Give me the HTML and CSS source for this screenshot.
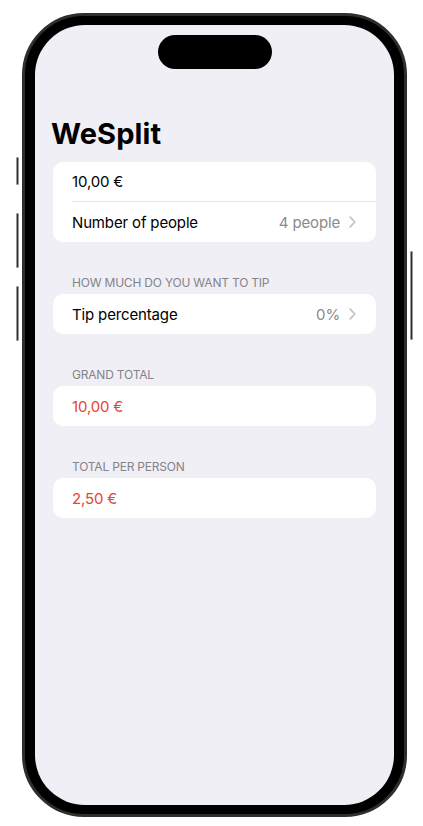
FILE: index.html
```html
<!DOCTYPE html>
<html>
<head>
<meta charset="utf-8">
<link rel="stylesheet" href="styles.css">
</head>
<body>
<div class="phone">
  <span class="btn btn-action"></span>
  <span class="btn btn-vol-up"></span>
  <span class="btn btn-vol-down"></span>
  <span class="btn btn-power"></span>
  <div class="bezel">
    <div class="screen">
      <div class="island"></div>
      <h1 class="title">WeSplit</h1>

      <div class="card">
        <div class="row divided"><span class="label">10,00 €</span></div>
        <div class="row">
          <span class="label">Number of people</span>
          <span class="value">4 people
            <svg class="chev" width="7" height="12" viewBox="0 0 7 12"><polyline points="1.2,1.2 5.8,6 1.2,10.8" fill="none" stroke="#c4c4c7" stroke-width="1.8" stroke-linecap="round" stroke-linejoin="round"/></svg>
          </span>
        </div>
      </div>

      <div class="header">HOW MUCH DO YOU WANT TO TIP</div>
      <div class="card">
        <div class="row">
          <span class="label">Tip percentage</span>
          <span class="value">0%
            <svg class="chev" width="7" height="12" viewBox="0 0 7 12"><polyline points="1.2,1.2 5.8,6 1.2,10.8" fill="none" stroke="#c4c4c7" stroke-width="1.8" stroke-linecap="round" stroke-linejoin="round"/></svg>
          </span>
        </div>
      </div>

      <div class="header">GRAND TOTAL</div>
      <div class="card">
        <div class="row"><span class="label red">10,00 €</span></div>
      </div>

      <div class="header">TOTAL PER PERSON</div>
      <div class="card">
        <div class="row"><span class="label red">2,50 €</span></div>
      </div>
    </div>
  </div>
</div>
</body>
</html>
```
FILE: styles.css
```css
* { box-sizing: border-box; }
html, body { margin: 0; padding: 0; background: #ffffff; }
body {
  font-family: Inter, "Noto Sans", "Liberation Sans", sans-serif;
  padding: 13px 0 0 22px;
}
.phone {
  position: relative;
  width: 385px;
  height: 804px;
}
.bezel {
  width: 100%;
  height: 100%;
  background: #000;
  border: 3px solid #2e2e2e;
  border-radius: 62px;
  padding: 9px 10px;
}
.screen {
  width: 100%;
  height: 100%;
  background: #f0eff5;
  border-radius: 50px;
  padding: 10px 18px 0 18px;
  overflow: hidden;
}
.island {
  width: 114px;
  height: 34px;
  background: #000;
  border-radius: 17px;
  margin: 0 auto;
}
.btn {
  position: absolute;
  width: 3px;
  background: #2a2a2a;
  border: 1px solid #9a9a9a;
  border-radius: 1px;
}
.btn-action { left: -6px; top: 144px; height: 28px; }
.btn-vol-up { left: -6px; top: 200px; height: 55px; }
.btn-vol-down { left: -6px; top: 273px; height: 55px; }
.btn-power { right: -6px; top: 238px; height: 89px; }

.title {
  margin: 48px 0 11px -2px;
  font-size: 29px;
  line-height: 34px;
  font-weight: 700;
  color: #000;
  letter-spacing: 0.1px;
}
.card {
  background: #fff;
  border-radius: 10px;
  padding-left: 19px;
}
.row {
  height: 40px;
  display: flex;
  align-items: center;
  justify-content: space-between;
  padding-right: 20px;
  font-size: 15px;
  letter-spacing: -0.15px;
  color: #000;
}
.row.divided { border-bottom: 1px solid #e3e3e6; }
.value {
  display: flex;
  align-items: center;
  gap: 9px;
  color: #8a8a8e;
}
.chev { display: block; }
.red { color: #e5452f; }
.header {
  margin: 33px 0 3px 19px;
  font-size: 12px;
  line-height: 16px;
  color: #838388;
  letter-spacing: -0.2px;
}
```
